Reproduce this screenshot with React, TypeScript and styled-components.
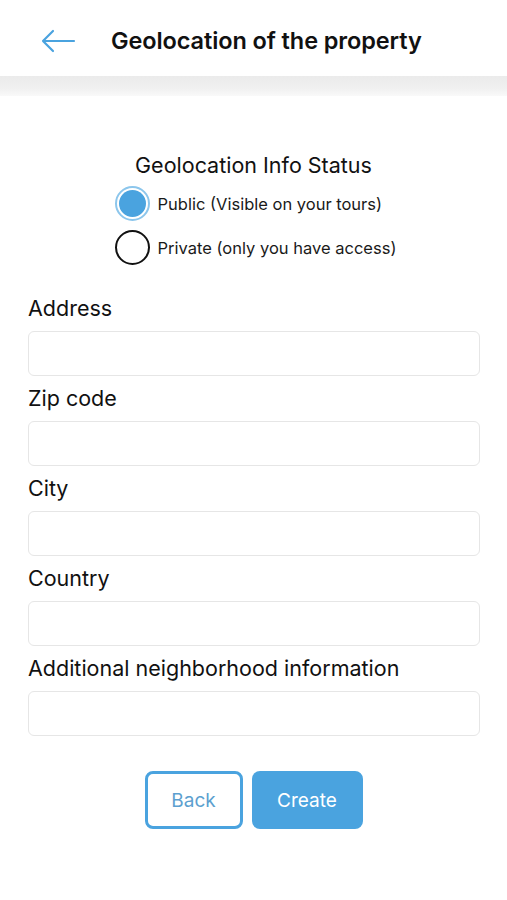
import React, { useState } from 'react';
import styled, { createGlobalStyle } from 'styled-components';

const BLUE = '#4aa3df';

const GlobalStyle = createGlobalStyle`
   html, body {
      margin: 0;
      padding: 0;
      background: #ffffff;
   }
   body {
      font-family: Inter, "Noto Sans", "Liberation Sans", sans-serif;
      color: #111111;
   }
`;

const FIELDS = [
   'Address',
   'Zip code',
   'City',
   'Country',
   'Additional neighborhood information',
];

function BackArrow() {
   return (
      <svg width="36" height="24" viewBox="0 0 36 24" fill="none">
         <path
            d="M34 12H3M13 2L3 12l10 10"
            stroke={BLUE}
            strokeWidth="2.2"
            strokeLinecap="round"
            strokeLinejoin="round"
         />
      </svg>
   );
}

export default function App() {
   const [status, setStatus] = useState<'public' | 'private'>('public');

   return (
      <Page>
         <GlobalStyle />
         <Header>
            <BackButton>
               <BackArrow />
            </BackButton>
            <Title>Geolocation of the property</Title>
         </Header>
         <Shade />

         <StatusBlock>
            <StatusTitle>Geolocation Info Status</StatusTitle>
            <RadioList>
               <RadioRow onClick={() => setStatus('public')}>
                  <RadioCircle $checked={status === 'public'} />
                  <RadioLabel>Public (Visible on your tours)</RadioLabel>
               </RadioRow>
               <RadioRow onClick={() => setStatus('private')}>
                  <RadioCircle $checked={status === 'private'} />
                  <RadioLabel>Private (only you have access)</RadioLabel>
               </RadioRow>
            </RadioList>
         </StatusBlock>

         <Form>
            {FIELDS.map((name) => (
               <Field key={name}>
                  <FieldLabel>{name}</FieldLabel>
                  <Input />
               </Field>
            ))}
         </Form>

         <Actions>
            <OutlineButton>Back</OutlineButton>
            <FilledButton>Create</FilledButton>
         </Actions>
      </Page>
   );
}

const Page = styled.div`
   width: 507px;
   min-height: 900px;
   background: #ffffff;
`;

const Header = styled.div`
   height: 76px;
   display: flex;
   align-items: center;
   padding: 5px 0 0 40px;
   gap: 35px;
   box-sizing: border-box;
`;

const BackButton = styled.div`
   display: flex;
   align-items: center;
   width: 36px;
`;

const Title = styled.div`
   font-size: 23.5px;
   font-weight: 600;
   color: #111111;
   letter-spacing: -0.1px;
`;

const Shade = styled.div`
   height: 20px;
   background: linear-gradient(180deg, #ebebeb 0%, #f0f0f0 60%, #f9f9f9 100%);
`;

const StatusBlock = styled.div`
   display: flex;
   flex-direction: column;
   align-items: center;
   padding-top: 54px;
`;

const StatusTitle = styled.div`
   font-size: 21.5px;
   font-weight: 400;
   line-height: 30px;
   color: #111111;
`;

const RadioList = styled.div`
   display: flex;
   flex-direction: column;
   gap: 9px;
   margin-top: 6px;
   margin-left: 4px;
`;

const RadioRow = styled.div`
   display: flex;
   align-items: center;
   gap: 8px;
   cursor: pointer;
`;

const RadioCircle = styled.div<{ $checked: boolean }>`
   width: 35px;
   height: 35px;
   box-sizing: border-box;
   border-radius: 50%;
   border: 2px solid ${(p) => (p.$checked ? '#8cc6ec' : '#111111')};
   padding: 2px;
   display: flex;

   &::after {
      content: '';
      flex: 1;
      border-radius: 50%;
      background: ${(p) => (p.$checked ? BLUE : 'transparent')};
   }
`;

const RadioLabel = styled.span`
   font-size: 16.5px;
   color: #1a1a1a;
`;

const Form = styled.div`
   display: flex;
   flex-direction: column;
   gap: 8px;
   padding: 29px 27px 0 28px;
`;

const Field = styled.div`
   display: flex;
   flex-direction: column;
`;

const FieldLabel = styled.div`
   font-size: 21.5px;
   line-height: 28px;
   color: #111111;
   margin-bottom: 9px;
`;

const Input = styled.input`
   height: 45px;
   box-sizing: border-box;
   border: 1px solid #e6e6e6;
   border-radius: 6px;
   background: #ffffff;
   font-size: 16px;
   padding: 0 10px;
   outline: none;
`;

const Actions = styled.div`
   display: flex;
   justify-content: center;
   gap: 9px;
   padding-top: 35px;
`;

const buttonBase = `
   height: 58px;
   box-sizing: border-box;
   border-radius: 8px;
   font-family: Inter, "Noto Sans", "Liberation Sans", sans-serif;
   font-size: 19px;
   cursor: pointer;
`;

const OutlineButton = styled.button`
   ${buttonBase}
   width: 98px;
   background: #ffffff;
   border: 3px solid ${BLUE};
   color: #5c9fcf;
`;

const FilledButton = styled.button`
   ${buttonBase}
   width: 111px;
   background: ${BLUE};
   border: none;
   color: #ffffff;
`;
